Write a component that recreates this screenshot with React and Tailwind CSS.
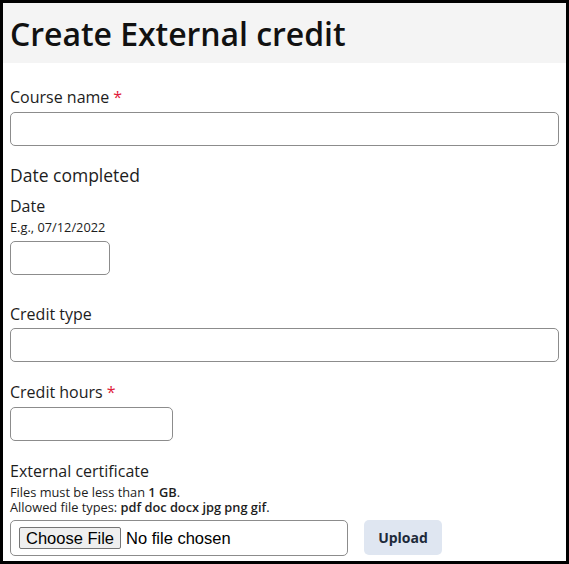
import React from 'react';

const Req = () => <span className="text-[#e0193a] ml-1">*</span>;

export default function App() {
  return (
    <div className="w-[569px] h-[564px] border-[3px] border-black overflow-hidden bg-white text-[#1d1d1d] font-['Open_Sans',sans-serif]">
      {/* header */}
      <div className="h-[60px] bg-[#f4f4f4] flex items-center px-[7px]">
        <h1 className="text-[32px] font-semibold leading-none text-[#111] pt-[1px] tracking-[-0.05px]">Create External credit</h1>
      </div>

      <div className="px-[7px] pt-[22px]">
        <label className="block text-base leading-6">
          Course name<Req />
        </label>
        <input className="mt-[3px] w-full h-[34px] border border-[#8c8c8c] rounded-[5px]" />

        <div className="mt-4 text-[17.5px] leading-[26px]">Date completed</div>
        <div className="mt-[7px] text-base leading-[22px]">Date</div>
        <div className="mt-[2px] text-[12.8px] leading-4">E.g., 07/12/2022</div>
        <input className="mt-[6px] w-[100px] h-[34px] border border-[#8c8c8c] rounded-[5px]" />

        <label className="block mt-[27px] text-base leading-6">Credit type</label>
        <input className="mt-[2px] w-full h-[34px] border border-[#8c8c8c] rounded-[5px]" />

        <label className="block mt-[18px] text-base leading-6">
          Credit hours<Req />
        </label>
        <input className="mt-[3px] w-[163px] h-[34px] border border-[#8c8c8c] rounded-[5px]" />

        <div className="mt-[18px] text-base leading-6">External certificate</div>
        <div className="mt-[2px] text-[12.8px] leading-[15px]">
          Files must be less than <span className="font-semibold">1 GB</span>.
        </div>
        <div className="text-[12.8px] leading-[15px]">
          Allowed file types: <span className="font-semibold">pdf doc docx jpg png gif</span>.
        </div>

        <div className="mt-[5px] flex items-start gap-[16px]">
          <div className="w-[338px] h-[36px] border border-[#8c8c8c] rounded-[5px] flex items-center pl-[8px] font-['Liberation_Sans',sans-serif] text-[16.5px] text-black">
            <button className="h-[22px] px-[6px] bg-[#efefef] border border-[#767676] rounded-[2px] leading-none">Choose File</button>
            <span className="ml-[5px]">No file chosen</span>
          </div>
          <button className="w-[78px] h-[35px] bg-[#dfe6f1] rounded-[5px] text-sm font-bold text-[#1d2a3a]">Upload</button>
        </div>
      </div>
    </div>
  );
}
